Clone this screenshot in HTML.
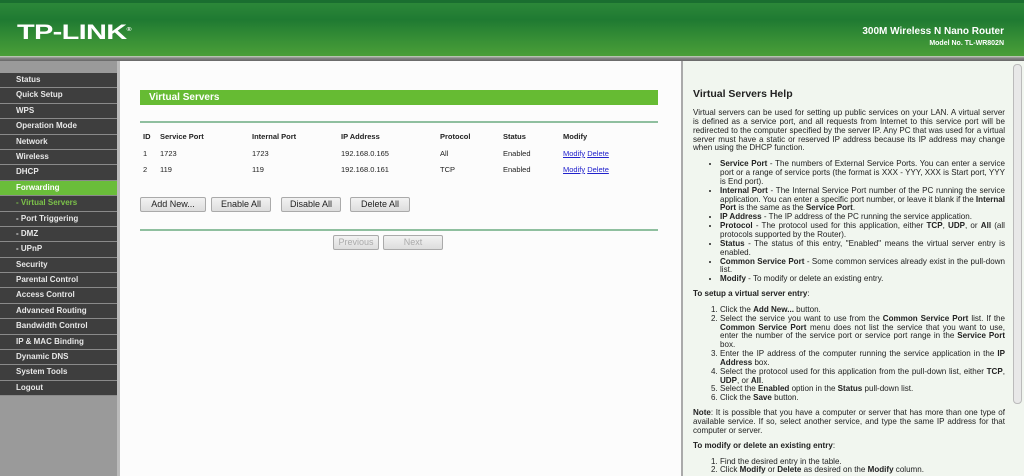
<!DOCTYPE html>
<html><head><meta charset="utf-8"><style>
*{margin:0;padding:0;box-sizing:border-box}
body{width:1024px;height:476px;overflow:hidden;font-family:"Liberation Sans",sans-serif;background:#fff;position:relative}
#hdr{position:absolute;left:0;top:0;width:1024px;height:56px;background:linear-gradient(#2e8a3a 0%,#1f7a32 35%,#3a9236 75%,#4a9e38 100%)}
#hdr:before{content:"";position:absolute;left:0;top:0;right:0;height:3px;background:#1a6e30}
#hdr .logo{position:absolute;left:17px;top:21px;color:#fff;font:bold 21px "Liberation Sans",sans-serif;letter-spacing:-0.5px;transform:scaleX(1.38);transform-origin:left}
#hdr .t1{position:absolute;right:20px;top:26px;color:#fff;font-size:10px;font-weight:bold}
#hdr .t2{position:absolute;right:20px;top:40px;color:#fff;font-size:7px;font-weight:bold}
#strip{position:absolute;left:0;top:56px;width:1024px;height:5px;background:linear-gradient(#c8d8c0,#888 40%,#666)}
#side{position:absolute;left:0;top:61px;width:117px;height:415px;background:#9a9a9a}
#sideb{position:absolute;left:117px;top:61px;width:3px;height:415px;background:#bbb}
#menu{position:absolute;left:0;top:73px;width:117px}
#menu div{height:15.4px;line-height:14px;background:#3e3e3e;border-bottom:1.4px solid #8a8a8a;color:#e8e8e8;font-size:8px;font-weight:bold;padding-left:16px}
#menu div.g{background:#6abd3a;color:#fff}
#menu div.s{color:#7cc24a}
#main{position:absolute;left:120px;top:61px;width:561px;height:415px;background:#fcfcfc}
.bar{position:absolute;left:20px;top:29px;width:518px;height:15px;background:#66bb33;color:#fff;font-size:10px;font-weight:bold;padding-left:9px;line-height:15px}
.hl{position:absolute;left:20px;width:518px;height:2px;background:#8fbf9f}
.c{position:absolute;font-size:7.5px;color:#222}
.b{font-weight:bold}
a{color:#2222cc;text-decoration:underline}
.btn{position:absolute;top:136px;height:15px;border:1px solid #aaa;border-radius:2px;background:linear-gradient(#f2f2f2,#ddd);font-size:9px;color:#222;text-align:center;line-height:13px}
.dis{color:#aaa;top:174px}
#help{position:absolute;left:681px;top:61px;width:343px;height:415px;background:#f1f6ef;border-left:2px solid #aaa}
#hc{position:absolute;left:10px;top:27px;width:312px;font-size:8.05px;line-height:8.85px;color:#222;text-align:justify}
#hc h2{font-size:10.5px;margin-bottom:9px;line-height:12px}
#hc ul{margin:7px 0 0 27px;padding:0}
#hc ol{margin:7px 0 0 27px;padding:0}
#hc p{margin-top:6px}
#sb{position:absolute;left:1013px;top:64px;width:9px;height:340px;border:1px solid #bbb;border-radius:4px;background:#e8e8e8}
</style></head><body>
<div id="hdr"><div class="logo">TP-LINK<sup style="font-size:5px">®</sup></div><div class="t1">300M Wireless N Nano Router</div><div class="t2">Model No. TL-WR802N</div></div>
<div id="strip"></div>
<div id="side"></div><div id="sideb"></div>
<div id="menu">
<div>Status</div><div>Quick Setup</div><div>WPS</div><div>Operation Mode</div><div>Network</div><div>Wireless</div><div>DHCP</div><div class="g">Forwarding</div><div class="s">- Virtual Servers</div><div>- Port Triggering</div><div>- DMZ</div><div>- UPnP</div><div>Security</div><div>Parental Control</div><div>Access Control</div><div>Advanced Routing</div><div>Bandwidth Control</div><div>IP &amp; MAC Binding</div><div>Dynamic DNS</div><div>System Tools</div><div>Logout</div>
</div>
<div id="main">
<div class="bar">Virtual Servers</div>
<div class="hl" style="top:60px"></div>
<div class="c b" style="left:23px;top:71px">ID</div><div class="c b" style="left:40px;top:71px">Service Port</div><div class="c b" style="left:132px;top:71px">Internal Port</div><div class="c b" style="left:221px;top:71px">IP Address</div><div class="c b" style="left:320px;top:71px">Protocol</div><div class="c b" style="left:383px;top:71px">Status</div><div class="c b" style="left:443px;top:71px">Modify</div>
<div class="c" style="left:23px;top:88px">1</div><div class="c" style="left:40px;top:88px">1723</div><div class="c" style="left:132px;top:88px">1723</div><div class="c" style="left:221px;top:88px">192.168.0.165</div><div class="c" style="left:320px;top:88px">All</div><div class="c" style="left:383px;top:88px">Enabled</div><div class="c" style="left:443px;top:88px"><a>Modify</a> <a>Delete</a></div>
<div class="c" style="left:23px;top:104px">2</div><div class="c" style="left:40px;top:104px">119</div><div class="c" style="left:132px;top:104px">119</div><div class="c" style="left:221px;top:104px">192.168.0.161</div><div class="c" style="left:320px;top:104px">TCP</div><div class="c" style="left:383px;top:104px">Enabled</div><div class="c" style="left:443px;top:104px"><a>Modify</a> <a>Delete</a></div>
<div class="btn" style="left:20px;width:66px">Add New...</div><div class="btn" style="left:91px;width:60px">Enable All</div><div class="btn" style="left:161px;width:60px">Disable All</div><div class="btn" style="left:230px;width:60px">Delete All</div>
<div class="hl" style="top:168px"></div>
<div class="btn dis" style="left:213px;width:46px">Previous</div><div class="btn dis" style="left:263px;width:60px">Next</div>
</div>
<div id="help"><div id="hc">
<h2>Virtual Servers Help</h2>
<div>Virtual servers can be used for setting up public services on your LAN. A virtual server is defined as a service port, and all requests from Internet to this service port will be redirected to the computer specified by the server IP. Any PC that was used for a virtual server must have a static or reserved IP address because its IP address may change when using the DHCP function.</div>
<ul>
<li><b>Service Port</b> - The numbers of External Service Ports. You can enter a service port or a range of service ports (the format is XXX - YYY, XXX is Start port, YYY is End port).</li>
<li><b>Internal Port</b> - The Internal Service Port number of the PC running the service application. You can enter a specific port number, or leave it blank if the <b>Internal Port</b> is the same as the <b>Service Port</b>.</li>
<li><b>IP Address</b> - The IP address of the PC running the service application.</li>
<li><b>Protocol</b> - The protocol used for this application, either <b>TCP</b>, <b>UDP</b>, or <b>All</b> (all protocols supported by the Router).</li>
<li><b>Status</b> - The status of this entry, "Enabled" means the virtual server entry is enabled.</li>
<li><b>Common Service Port</b> - Some common services already exist in the pull-down list.</li>
<li><b>Modify</b> - To modify or delete an existing entry.</li>
</ul>
<p><b>To setup a virtual server entry</b>:</p>
<ol>
<li>Click the <b>Add New...</b> button.</li>
<li>Select the service you want to use from the <b>Common Service Port</b> list. If the <b>Common Service Port</b> menu does not list the service that you want to use, enter the number of the service port or service port range in the <b>Service Port</b> box.</li>
<li>Enter the IP address of the computer running the service application in the <b>IP Address</b> box.</li>
<li>Select the protocol used for this application from the pull-down list, either <b>TCP</b>, <b>UDP</b>, or <b>All</b>.</li>
<li>Select the <b>Enabled</b> option in the <b>Status</b> pull-down list.</li>
<li>Click the <b>Save</b> button.</li>
</ol>
<p><b>Note</b>: It is possible that you have a computer or server that has more than one type of available service. If so, select another service, and type the same IP address for that computer or server.</p>
<p><b>To modify or delete an existing entry</b>:</p>
<ol>
<li>Find the desired entry in the table.</li>
<li>Click <b>Modify</b> or <b>Delete</b> as desired on the <b>Modify</b> column.</li>
</ol>
</div></div>
<div id="sb"></div>
</body></html>
